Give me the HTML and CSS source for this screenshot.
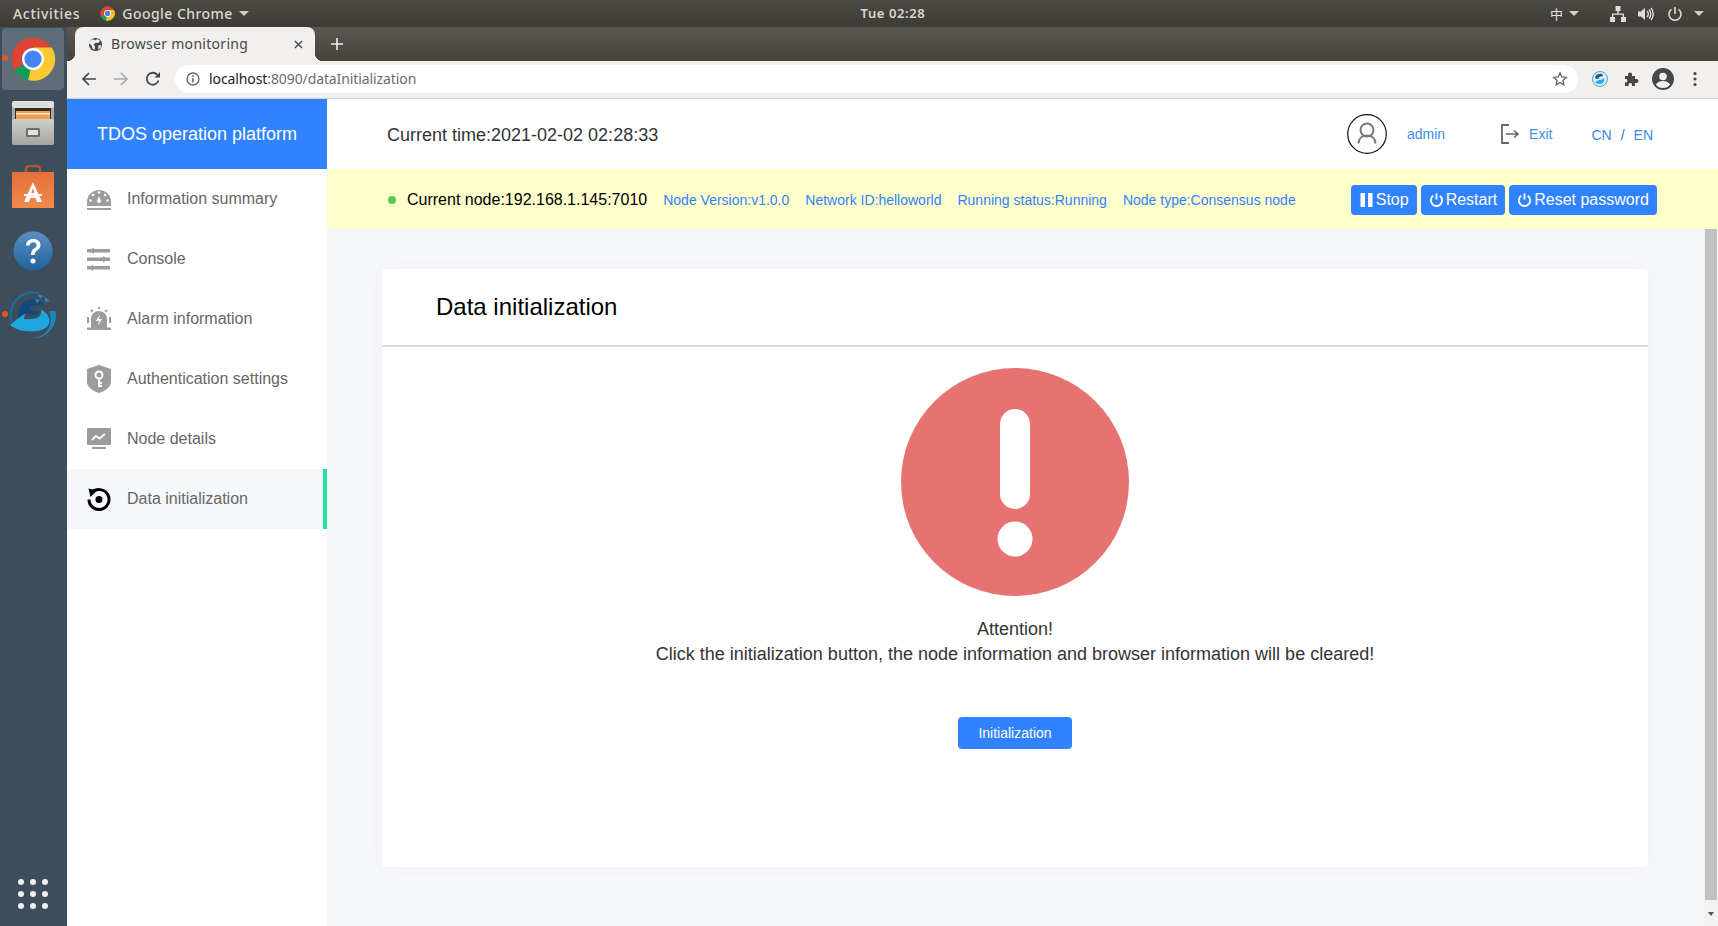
FILE: index.html
```html
<!DOCTYPE html>
<html lang="en">
<head>
<meta charset="utf-8">
<title>Browser monitoring</title>
<link rel="stylesheet" href="styles.css">
</head>
<body>
<div class="desktop">
  <header class="topbar">
    <div class="top-left">
      <span class="top-text activities">Activities</span>
      <svg class="top-chrome" viewBox="0 0 48 48"><circle cx="24" cy="24" r="23" fill="#db4437"/><path d="M24 24 L44 36 A23 23 0 0 1 4 36Z" fill="#0f9d58"/><path d="M24 13 H45 A23 23 0 0 1 19 46 L24 24Z" fill="#fbc02d"/><circle cx="24" cy="24" r="11" fill="#fff"/><circle cx="24" cy="24" r="8.5" fill="#4285f4"/></svg>
      <span class="top-text">Google Chrome</span>
      <span class="caret"></span>
    </div>
    <div class="clock">Tue 02:28</div>
    <div class="top-right">
      <span class="ime">中</span><span class="caret ime-caret"></span>
      <svg class="tray net" viewBox="0 0 16 16"><path d="M5.5 0h5v5h-5zM0 11h5v5H0zM11 11h5v5h-5zM7.3 5h1.4v2.5H14V11h-1.300V8.800H3.300V11H2V7.500h5.300z" fill="#ddd"/></svg>
      <svg class="tray vol" viewBox="0 0 16 16"><path d="M0 5.500h3L7 2v12l-4-3.500H0z" fill="#ddd"/><path d="M9 5a4 4 0 0 1 0 6M11 3.500a6.500 6.500 0 0 1 0 9M13 2a9 9 0 0 1 0 12" stroke="#ddd" stroke-width="1.400" fill="none"/></svg>
      <svg class="tray pow" viewBox="0 0 16 16"><path d="M8 1v7" stroke="#ddd" stroke-width="1.600"/><path d="M4.500 3.400a6 6 0 1 0 7 0" stroke="#ddd" stroke-width="1.600" fill="none"/></svg>
      <span class="caret pow-caret"></span>
    </div>
  </header>

  <div class="below-top">
    <aside class="dock">
      <div class="dock-item active">
        <span class="run-dot"></span>
        <svg class="dock-icon chrome" viewBox="0 0 48 48"><circle cx="24" cy="24" r="22.500" fill="#db4437"/><path d="M24 24 L43.500 35.300 A22.500 22.500 0 0 1 4.500 35.300Z" fill="#0f9d58"/><path d="M24 12 H43.500 A22.500 22.500 0 0 1 19 46 L24 24Z" fill="#fcc934"/><circle cx="24" cy="24" r="11.500" fill="#fff"/><circle cx="24" cy="24" r="9" fill="#4285f4"/></svg>
      </div>
      <div class="dock-item">
        <svg class="dock-icon" viewBox="0 0 42 44"><defs><linearGradient id="drawerg" x1="0" y1="0" x2="0" y2="1"><stop offset="0" stop-color="#cfcfcb"/><stop offset="1" stop-color="#a4a4a0"/></linearGradient></defs><rect width="42" height="44" rx="3" fill="#a9a9a5"/><rect width="42" height="7" rx="2" fill="#dededb"/><rect x="3" y="7" width="36" height="11" fill="#2e2c29"/><rect x="4" y="10" width="34" height="8" fill="#f0a04f"/><rect x="4" y="12" width="34" height="1.500" fill="#fbe6cb"/><rect y="18" width="42" height="26" rx="2" fill="url(#drawerg)"/><rect x="14" y="27" width="14" height="9" rx="1.500" fill="#6d6d69"/><rect x="16" y="29" width="10" height="5" fill="#e3e3e0"/></svg>
      </div>
      <div class="dock-item">
        <svg class="dock-icon" viewBox="0 0 42 44"><defs><linearGradient id="bagg" x1="0" y1="0" x2="0" y2="1"><stop offset="0" stop-color="#e56f3a"/><stop offset="1" stop-color="#f08a4c"/></linearGradient></defs><path d="M14 10V4a3 3 0 0 1 3-3h8a3 3 0 0 1 3 3v6" stroke="#b9532a" stroke-width="2.500" fill="none"/><rect y="7" width="42" height="36" fill="url(#bagg)"/><path d="M21 17l-9 20h5l1.500-4h5l1.500 4h5zM19.500 28l1.500-5 1.500 5z" fill="#fff"/><rect x="12" y="29" width="18" height="2" fill="#fff"/></svg>
      </div>
      <div class="dock-item">
        <svg class="dock-icon help" viewBox="0 0 40 40"><defs><linearGradient id="helpg" x1="0" y1="0" x2="0" y2="1"><stop offset="0" stop-color="#5b8fc4"/><stop offset="1" stop-color="#20639b"/></linearGradient></defs><circle cx="20" cy="20" r="19.500" fill="url(#helpg)"/><path d="M13 14.500c0-4 3-6.500 7.300-6.500 4.300 0 7.200 2.500 7.200 6 0 2.700-1.500 4.100-3.400 5.500-1.700 1.200-2.300 2-2.300 4v.5h-3.700v-1c0-2.800 1-4 3-5.500 1.500-1.100 2.500-1.900 2.500-3.300 0-1.700-1.500-3-3.400-3-2.100 0-3.500 1.400-3.600 3.300z" fill="#fff"/><circle cx="20" cy="30" r="2.500" fill="#fff"/></svg>
      </div>
      <div class="dock-item">
        <span class="run-dot"></span>
        <svg class="dock-icon swirl" viewBox="0 0 48 48"><path d="M3 31A22 22 0 0 1 30 2.500" fill="none" stroke="#1d6d9e" stroke-width="2"/><path d="M1 34 L16 22 L15 28 C26 29 33 27 32 19 C44 24 44 38 28 40 C18 41 8 40 1 34Z" fill="#1ea7de"/><path d="M9 27 C8 14 18 5 30 9 L36 14 L26 15 C20 16 19 19 26 20 L30 20 C29 24 23 26 17 22Z" fill="#0f4a78"/><path d="M29 3l5 2-3 3zM36 6l5 4-5 1zM26 8l5 1-3 3z" fill="#2a88bb"/><path d="M46.500 20 A23 23 0 0 1 24 47.500 C34 46 46 38 40 20Z" fill="#1b87bf"/></svg>
      </div>
      <div class="apps">
        <i></i><i></i><i></i><i></i><i></i><i></i><i></i><i></i><i></i>
      </div>
    </aside>

    <div class="browser">
      <div class="tabstrip">
        <div class="tab">
          <svg class="globe" viewBox="0 0 16 16"><circle cx="8" cy="8" r="7" fill="#45474a"/><path d="M5 2.500l3 1 2-1.500 3 2-2 2.500-3-.5-2 2 1.500 2-.5 4-2.500-2-.5-3-3-2 1-3zM11 9l3-.5-.5 3-2.500 2z" fill="#f1f0ee"/></svg>
          <span class="tab-title">Browser monitoring</span>
          <svg class="tab-close" viewBox="0 0 10 10"><path d="M1 1l8 8M9 1L1 9" stroke="#45474a" stroke-width="1.500"/></svg>
        </div>
        <svg class="new-tab" viewBox="0 0 12 12"><path d="M6 0v12M0 6h12" stroke="#eee" stroke-width="1.600"/></svg>
      </div>

      <div class="toolbar">
        <svg class="tb-icon" viewBox="0 0 16 16"><path d="M15 8H2M8 2L2 8l6 6" stroke="#45474a" stroke-width="1.700" fill="none"/></svg>
        <svg class="tb-icon" viewBox="0 0 16 16"><path d="M1 8h13M8 2l6 6-6 6" stroke="#a8a9aa" stroke-width="1.700" fill="none"/></svg>
        <svg class="tb-icon" viewBox="0 0 16 16"><path d="M13.500 9.500A6 6 0 1 1 12.300 3.800" stroke="#45474a" stroke-width="1.800" fill="none"/><path d="M9.500 6.500h5.500V1z" fill="#45474a"/></svg>
        <div class="omnibox">
          <svg class="info" viewBox="0 0 14 14"><circle cx="7" cy="7" r="6" fill="none" stroke="#5f6368" stroke-width="1.300"/><path d="M7 6v4.500" stroke="#5f6368" stroke-width="1.500"/><circle cx="7" cy="4" r=".9" fill="#5f6368"/></svg>
          <span class="url"><span class="host">localhost</span>:8090/dataInitialization</span>
          <svg class="star" viewBox="0 0 16 16"><path d="M8 1.800l1.800 4.200 4.500.4-3.400 3 1 4.400L8 11.500l-3.900 2.300 1-4.400-3.400-3 4.500-.4z" fill="none" stroke="#5f6368" stroke-width="1.300"/></svg>
        </div>
        <svg class="ext-icon first" viewBox="0 0 16 16"><circle cx="8" cy="8" r="7.500" fill="#dceef8" stroke="#4aa5d8"/><path d="M3 6c1-2 4-4 7-3l1 2-4 1c-1 1 1 1 2 1L4 8z" fill="#1c5a85"/><path d="M3 11l4-2c2 0 4-1 5-2 1 3-1 6-4 6-2 0-4-1-5-2z" fill="#35a7dd"/></svg>
        <svg class="ext-icon puzzle" viewBox="0 0 16 16"><path d="M2 5h3V3.500a2 2 0 0 1 4 0V5h3v3h1.500a2 2 0 0 1 0 4H12v3H9v-1.500a1.800 1.800 0 0 0-3.500 0V15H2v-3.500h1a1.800 1.800 0 0 0 0-3.500H2z" fill="#45474a"/></svg>
        <svg class="ext-icon avatar-chrome" viewBox="0 0 22 22"><circle cx="11" cy="11" r="11" fill="#45474a"/><circle cx="11" cy="8.500" r="3.800" fill="#f1f0ee"/><path d="M3.800 16.500c1.500-2.500 4.500-3.500 7.200-3.500s5.700 1 7.200 3.500C16.500 19 14 20 11 20s-5.500-1-7.200-3.500z" fill="#f1f0ee"/></svg>
        <svg class="ext-icon dots" viewBox="0 0 4 16"><circle cx="2" cy="2.500" r="1.600" fill="#45474a"/><circle cx="2" cy="8" r="1.600" fill="#45474a"/><circle cx="2" cy="13.500" r="1.600" fill="#45474a"/></svg>
      </div>

      <div class="app">
        <nav class="sidebar">
          <div class="brand">TDOS operation platform</div>
          <a class="menu-item">
            <svg class="menu-icon" viewBox="0 0 24 24"><path d="M0 15a12 12 0 0 1 24 0v4H0z" fill="#9c9c9c"/><rect y="21" width="24" height="2" fill="#9c9c9c"/><g fill="#fff"><circle cx="12" cy="5.500" r="1.300"/><circle cx="6" cy="8" r="1.300"/><circle cx="18" cy="8" r="1.300"/><circle cx="3.500" cy="13.500" r="1.300"/><circle cx="20.500" cy="13.500" r="1.300"/><path d="M12 9l2 5a2 2 0 1 1-4 0z"/></g></svg>
            <span>Information summary</span>
          </a>
          <a class="menu-item">
            <svg class="menu-icon" viewBox="0 0 24 24"><g fill="#9c9c9c"><rect y="2" width="23" height="3.500"/><rect y="10.500" width="23" height="3.500"/><rect y="19" width="23" height="3.500"/><path d="M2 3.750L7 .5v6.500zM21 12.250L16 9v6.500zM1 20.750L6 17.500V24z"/></g></svg>
            <span>Console</span>
          </a>
          <a class="menu-item">
            <svg class="menu-icon" viewBox="0 0 24 24"><path d="M4 21v-9a8 8 0 0 1 16 0v9z" fill="#9c9c9c"/><rect y="20.500" width="24" height="2.500" fill="#9c9c9c"/><path d="M13 7.500l-4 6.500h3l-1 4.500 4-6.500h-3z" fill="#fff"/><path d="M12 0v2M4 3l1.800 1.800M20 3l-1.800 1.800M1 10v6M23 10v6" stroke="#9c9c9c" stroke-width="2"/></svg>
            <span>Alarm information</span>
          </a>
          <a class="menu-item">
            <svg class="menu-icon shield" viewBox="0 0 24 28"><path d="M12 0l12 4v13c0 5-6 9-12 11C6 26 0 22 0 17V4z" fill="#9c9c9c"/><circle cx="12" cy="10" r="3.500" fill="none" stroke="#fff" stroke-width="2"/><path d="M12 13v9M12 18h3M12 21h3" stroke="#fff" stroke-width="2"/></svg>
            <span>Authentication settings</span>
          </a>
          <a class="menu-item">
            <svg class="menu-icon" viewBox="0 0 24 24"><rect y="1" width="24" height="17" rx="1" fill="#9c9c9c"/><rect x="5" y="20" width="14" height="2" fill="#9c9c9c"/><path d="M5 13l4-4 3.500 2.500L18 7" stroke="#fff" stroke-width="1.800" fill="none"/></svg>
            <span>Node details</span>
          </a>
          <a class="menu-item selected">
            <svg class="menu-icon" viewBox="0 0 24 24"><path d="M5 5.400A10 10 0 1 1 2 12.500" stroke="#000" stroke-width="3" fill="none"/><path d="M1.500 1.500l8.500 2-6.500 6.500z" fill="#000"/><circle cx="12" cy="12.500" r="3.500" fill="#000"/></svg>
            <span>Data initialization</span>
          </a>
        </nav>

        <main class="main">
          <div class="header">
            <div class="time">Current time:2021-02-02 02:28:33</div>
            <div class="user-area">
              <svg class="user-avatar" viewBox="0 0 40 40"><circle cx="20" cy="20" r="19.300" fill="#fff" stroke="#111" stroke-width="1.200"/><circle cx="20" cy="16" r="6.500" fill="none" stroke="#777" stroke-width="2"/><path d="M11.500 29.500c0-5 3.500-8 8.500-8s8.500 3 8.500 8" fill="none" stroke="#777" stroke-width="2"/></svg>
              <a class="link admin">admin</a>
              <svg class="exit-icon" viewBox="0 0 18 20"><path d="M8 1H1v18h7" fill="none" stroke="#666" stroke-width="1.800"/><path d="M5 10h12M13 6.500l4 3.500-4 3.500" fill="none" stroke="#666" stroke-width="1.600"/></svg>
              <a class="link exit">Exit</a>
              <div class="lang"><a class="link">CN</a><span class="slash">/</span><a class="link">EN</a></div>
            </div>
          </div>

          <div class="statusbar">
            <span class="status-dot"></span>
            <span class="node">Current node:192.168.1.145:7010</span>
            <span class="meta">Node Version:v1.0.0</span>
            <span class="meta">Network ID:helloworld</span>
            <span class="meta">Running status:Running</span>
            <span class="meta">Node type:Consensus node</span>
            <div class="actions">
              <button class="btn"><svg class="btn-icon" viewBox="0 0 14 16"><rect x="1" y="1" width="4.500" height="14" fill="#fff"/><rect x="8.500" y="1" width="4.500" height="14" fill="#fff"/></svg>Stop</button>
              <button class="btn"><svg class="btn-icon" viewBox="0 0 16 16"><path d="M8 1v6.500" stroke="#fff" stroke-width="2"/><path d="M4.500 3.500a6 6 0 1 0 7 0" stroke="#fff" stroke-width="2" fill="none"/></svg>Restart</button>
              <button class="btn"><svg class="btn-icon" viewBox="0 0 16 16"><path d="M8 1v6.500" stroke="#fff" stroke-width="2"/><path d="M4.500 3.500a6 6 0 1 0 7 0" stroke="#fff" stroke-width="2" fill="none"/></svg>Reset password</button>
            </div>
          </div>

          <div class="content-row">
            <div class="page">
              <section class="card">
                <h1 class="card-title">Data initialization</h1>
                <div class="card-body">
                  <svg class="alert" viewBox="0 0 228 228"><circle cx="114" cy="114" r="114" fill="#e77272"/><rect x="99" y="41" width="30" height="100" rx="15" fill="#fff"/><circle cx="114" cy="171" r="17.500" fill="#fff"/></svg>
                  <p class="msg">Attention!<br>Click the initialization button, the node information and browser information will be cleared!</p>
                  <button class="init-btn">Initialization</button>
                </div>
              </section>
            </div>
            <div class="scrollbar">
              <div class="thumb"></div>
              <div class="arrow"></div>
            </div>
          </div>
        </main>
      </div>
    </div>
  </div>
</div>
</body>
</html>
```
FILE: styles.css
```css
* { box-sizing: border-box; }
html, body { margin: 0; padding: 0; height: 100%; overflow: hidden; }
body { font-family: "Liberation Sans", Arial, sans-serif; }
.desktop { width: 1718px; height: 926px; display: flex; flex-direction: column; }

/* GNOME top bar */
.topbar { height: 27px; flex: none; display: flex; align-items: center; justify-content: space-between; position: relative; background: linear-gradient(#4c4a42, #3d3b35); color: #ddd; font-family: "Noto Sans", sans-serif; font-size: 14px; }
.top-left { display: flex; align-items: center; padding-left: 13px; }
.top-text { color: #d8d8d4; font-weight: 500; letter-spacing: .45px; }
.activities { margin-right: 20px; letter-spacing: .7px; }
.top-chrome { width: 15px; height: 15px; margin-right: 7px; }
.caret { display: inline-block; width: 0; height: 0; border: 5px solid transparent; border-top: 5px solid #cfcfcb; border-bottom: 0; margin-left: 6px; }
.clock { position: absolute; left: 68px; top: 5px; width: 1650px; text-align: center; font-size: 13px; line-height: 17px; font-weight: 600; color: #d8d8d4; letter-spacing: .6px; }
.top-right { display: flex; align-items: center; padding-right: 14px; }
.ime { color: #dfe5ea; font-family: "Noto Sans CJK SC", sans-serif; font-size: 13px; line-height: 17px; }
.ime-caret { margin-left: 6px; }
.tray { height: 16px; width: 16px; display: block; }
.net { margin-left: 31px; }
.vol { margin-left: 12px; }
.pow { margin-left: 13px; }
.pow-caret { margin-left: 11px; }

.below-top { flex: 1; display: flex; min-height: 0; }

/* Dock */
.dock { width: 67px; flex: none; background: #3e4d5c; display: flex; flex-direction: column; padding-bottom: 17px; }
.dock-item { height: 64px; flex: none; display: flex; align-items: center; justify-content: center; position: relative; padding-right: 1px; }
.dock-item.active::before { content: ""; position: absolute; left: 2px; right: 3px; top: 1px; bottom: 1px; border-radius: 4px; background: #5e6d78; }
.dock-icon { width: 42px; height: 44px; position: relative; }
.chrome { width: 46px; height: 46px; }
.help { width: 40px; height: 40px; }
.swirl { width: 48px; height: 48px; }
.run-dot { position: absolute; left: 2px; top: 28px; width: 6px; height: 6px; border-radius: 50%; background: #e95420; z-index: 1; }
.apps { margin-top: auto; margin-left: 18px; width: 36px; display: grid; grid-template-columns: repeat(3, 6px); grid-auto-rows: 6px; gap: 6px; }
.apps i { display: block; width: 6px; height: 6px; border-radius: 50%; background: #f1f1f1; }

/* Browser chrome */
.browser { flex: 1; min-width: 0; display: flex; flex-direction: column; }
.tabstrip { height: 34px; flex: none; display: flex; align-items: center; padding-left: 8px; background: linear-gradient(#5a574f, #45433c); }
.tab { width: 240px; height: 34px; align-self: flex-end; background: #f1f0ee; border-radius: 8px 8px 0 0; display: flex; align-items: center; padding: 0 10px 0 13px; position: relative; }
.tab::before, .tab::after { content: ""; position: absolute; bottom: 0; width: 8px; height: 8px; }
.tab::before { left: -8px; background: radial-gradient(circle at 0 0, transparent 8px, #f1f0ee 8.5px); }
.tab::after { right: -8px; background: radial-gradient(circle at 100% 0, transparent 8px, #f1f0ee 8.5px); }
.globe { width: 15px; height: 15px; flex: none; }
.tab-title { margin-left: 8px; padding-bottom: 2px; flex: 1; font-family: "Noto Sans", sans-serif; font-size: 14px; color: #45474a; letter-spacing: .3px; }
.tab-close { width: 9px; height: 9px; flex: none; margin-right: 2px; }
.new-tab { width: 12px; height: 12px; margin-left: 16px; }

.toolbar { height: 38px; flex: none; background: #f1f0ee; border-bottom: 1px solid #d0d0ce; display: flex; align-items: center; padding: 0 0 1px 14px; }
.tb-icon { width: 16px; height: 16px; margin-right: 16px; flex: none; }
.tb-icon:nth-child(3) { margin-right: 14px; }
.omnibox { width: 1403px; height: 28px; border-radius: 14px; background: #fff; display: flex; align-items: center; padding: 0 10px 0 11px; flex: none; }
.info { width: 14px; height: 14px; flex: none; }
.url { margin-left: 9px; padding-bottom: 2px; flex: 1; font-family: "Noto Sans", sans-serif; font-size: 14px; letter-spacing: -.1px; color: #6a6d70; }
.host { color: #202124; }
.star { width: 16px; height: 16px; flex: none; }
.ext-icon { width: 16px; height: 16px; flex: none; margin-left: 16px; }
.ext-icon.first { margin-left: 14px; }
.ext-icon.puzzle { margin-left: 15px; }
.avatar-chrome { width: 22px; height: 22px; margin-left: 13px; }
.dots { width: 4px; margin-left: 19px; }

/* App */
.app { flex: 1; display: flex; min-height: 0; }
.sidebar { width: 260px; flex: none; background: #fff; display: flex; flex-direction: column; }
.brand { height: 70px; flex: none; background: #3182ff; color: #fff; font-size: 18px; display: flex; align-items: center; justify-content: center; }
.menu-item { height: 60px; flex: none; display: flex; align-items: center; gap: 16px; padding-left: 20px; color: #666; font-size: 16px; }
.menu-icon { width: 24px; height: 24px; flex: none; }
.menu-icon.shield { height: 28px; }
.selected { background: #f5f7fb; border-right: 4px solid #1fe39a; }

.main { flex: 1; min-width: 0; display: flex; flex-direction: column; background: #f5f7fb; }
.header { height: 70px; flex: none; background: #fff; display: flex; align-items: center; justify-content: space-between; padding: 0 65px 0 60px; }
.time { font-size: 18px; color: #333; padding-top: 2px; }
.user-area { display: flex; align-items: center; }
.user-avatar { width: 40px; height: 40px; }
.link { color: #3a8ee6; font-size: 14px; }
.admin { margin-left: 20px; }
.exit-icon { width: 18px; height: 20px; margin-left: 56px; }
.exit { margin-left: 10px; }
.lang { display: flex; align-items: center; margin-left: 39px; padding-top: 2px; }
.lang .link { color: #3a86ef; }
.slash { color: #3a6ea8; font-size: 14px; margin: 0 9px; }

.statusbar { height: 60px; flex: none; background: #ffffcc; display: flex; align-items: center; padding: 2px 0 0 61px; }
.status-dot { width: 8px; height: 8px; border-radius: 50%; background: #4fd05d; }
.node { margin-left: 11px; font-size: 16px; color: #000; margin-right: 16px; }
.meta { font-size: 14px; color: #3182ff; margin-right: 16px; }
.actions { display: flex; gap: 4px; margin-left: 39px; }
.btn { height: 30px; border: 0; border-radius: 4px; background: #3182ff; color: #fff; font: 16px "Liberation Sans", Arial, sans-serif; display: flex; align-items: center; gap: 2px; padding: 0 8px; }
.btn-icon { width: 15px; height: 16px; }

.content-row { flex: 1; min-height: 0; display: flex; }
.page { flex: 1; min-width: 0; padding: 40px 56px 0 55px; }
.card { height: 598px; background: #fff; border-radius: 4px; box-shadow: 0 0 20px rgba(0,0,0,.03); }
.card-title { height: 78px; margin: 0; padding: 0 0 0 54px; display: flex; align-items: center; font-size: 24px; font-weight: 400; color: #000; border-bottom: 2px solid #dcdcdc; }
.card-body { display: flex; flex-direction: column; align-items: center; padding-top: 21px; }
.alert { width: 228px; height: 228px; display: block; }
.msg { margin: 21px 0 0; font-size: 18px; line-height: 25px; color: #333; text-align: center; }
.init-btn { margin-top: 50px; width: 114px; height: 32px; border: 0; border-radius: 4px; background: #3182ff; color: #fff; font: 14px "Liberation Sans", Arial, sans-serif; }

.scrollbar { width: 14px; flex: none; background: #f1f1f1; padding: 0 1px; display: flex; flex-direction: column; }
.thumb { height: 671px; background: #c1c1c1; }
.arrow { width: 0; height: 0; border: 3.5px solid transparent; border-top: 4px solid #505050; border-bottom: 0; margin: 12px auto 0; }
```
